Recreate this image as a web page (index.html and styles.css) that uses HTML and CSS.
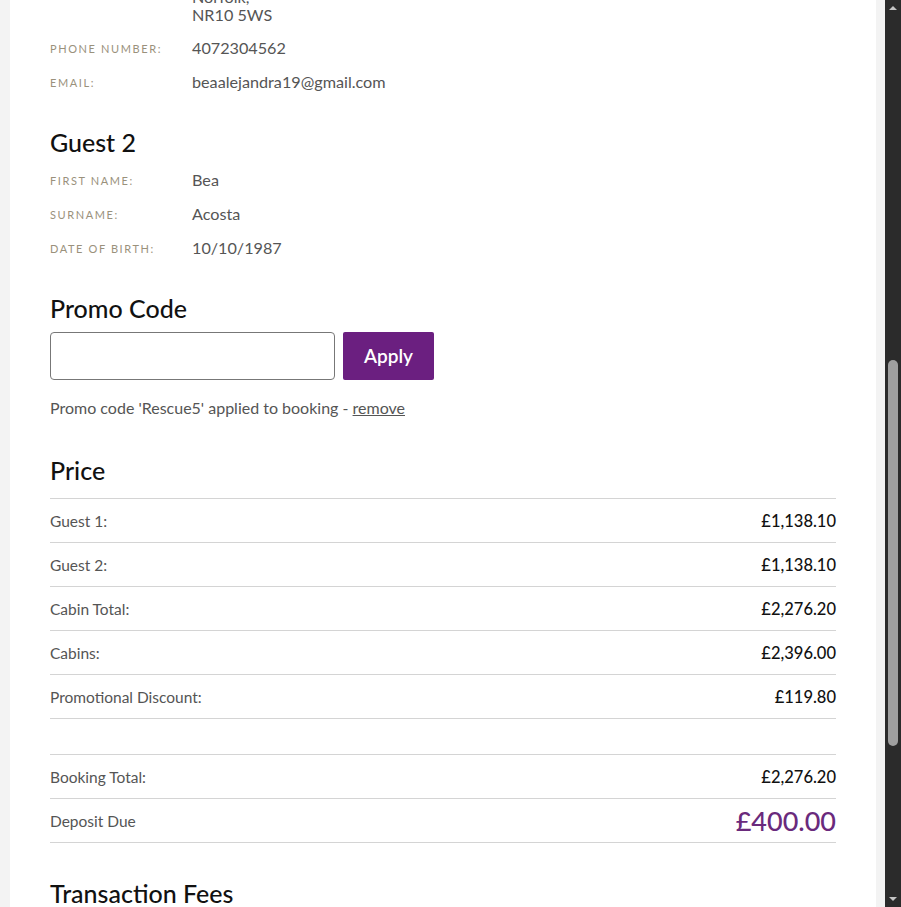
FILE: index.html
```html
<!DOCTYPE html>
<html lang="en">

<head>
    <meta charset="UTF-8">
    <meta name="viewport" content="width=device-width, initial-scale=1.0">
    <title>Booking summary</title>
    <link rel="stylesheet" href="styles.css">
</head>

<body>
    <div class="gutter"></div>

    <main class="panel">
        <dl class="details details-top">
            <dt></dt>
            <dd class="address">Norfolk,<br>NR10 5WS</dd>
            <dt>Phone number:</dt>
            <dd>4072304562</dd>
            <dt>Email:</dt>
            <dd>beaalejandra19@gmail.com</dd>
        </dl>

        <h2>Guest 2</h2>
        <dl class="details">
            <dt>First name:</dt>
            <dd>Bea</dd>
            <dt>Surname:</dt>
            <dd>Acosta</dd>
            <dt>Date of birth:</dt>
            <dd>10/10/1987</dd>
        </dl>

        <h2 class="promo-title">Promo Code</h2>
        <div class="promo">
            <input type="text" class="promo-input">
            <button class="promo-btn">Apply</button>
        </div>
        <p class="promo-note">Promo code 'Rescue5' applied to booking - <a href="#">remove</a></p>

        <h2>Price</h2>
        <div class="prices">
            <div class="row"><span>Guest 1:</span><strong>£1,138.10</strong></div>
            <div class="row"><span>Guest 2:</span><strong>£1,138.10</strong></div>
            <div class="row"><span>Cabin Total:</span><strong>£2,276.20</strong></div>
            <div class="row"><span>Cabins:</span><strong>£2,396.00</strong></div>
            <div class="row"><span>Promotional Discount:</span><strong>£119.80</strong></div>
            <div class="row empty"></div>
            <div class="row"><span>Booking Total:</span><strong>£2,276.20</strong></div>
            <div class="row deposit"><span>Deposit Due</span><strong>£400.00</strong></div>
        </div>

        <h2>Transaction Fees</h2>
    </main>

    <div class="gutter gutter-right"></div>

    <div class="scrollbar">
        <div class="arrow up"></div>
        <div class="track">
            <div class="thumb"></div>
        </div>
        <div class="arrow down"></div>
    </div>
</body>

</html>
```

FILE: styles.css
```css
* {
    margin: 0;
    padding: 0;
    box-sizing: border-box;
}

html,
body {
    height: 907px;
    overflow: hidden;
}

body {
    display: flex;
    background-color: #f3f3f3;
    font-family: Lato, "Noto Sans", sans-serif;
    color: #555;
}

.gutter {
    width: 10px;
    flex-shrink: 0;
}

.gutter-right {
    width: 9px;
}

.panel {
    flex: 1;
    background-color: #FFF;
    padding: 0 40px;
}

h2 {
    font-size: 25px;
    line-height: 28px;
    font-weight: 500;
    color: #111;
    margin: 36px 0 14px;
}

.details {
    display: grid;
    grid-template-columns: 142px 1fr;
    row-gap: 14px;
    align-items: center;
}

.details-top {
    margin-top: -12px;
}

.details dt {
    font-size: 11px;
    letter-spacing: 1.6px;
    text-transform: uppercase;
    color: #9a917c;
}

.details dd {
    font-size: 16.2px;
    line-height: 20px;
    color: #555;
}

.details dd.address {
    line-height: 18px;
}

.promo-title {
    margin-bottom: 10px;
}

.promo {
    display: flex;
    gap: 8px;
}

.promo-input {
    width: 285px;
    height: 48px;
    border: 1px solid #777;
    border-radius: 4px;
    outline: none;
}

.promo-btn {
    width: 91px;
    height: 48px;
    border: none;
    border-radius: 2px;
    background-color: #6b1f80;
    color: #FFF;
    font-family: inherit;
    font-size: 19px;
    font-weight: 600;
    padding-bottom: 2px;
}

.promo-note {
    margin-top: 18px;
    font-size: 16px;
    line-height: 20px;
}

.promo-note a {
    color: #555;
}

.promo-note + h2 {
    margin-top: 38px;
}

.prices {
    border-top: 1px solid #d4d4d4;
}

.row {
    display: flex;
    justify-content: space-between;
    align-items: center;
    height: 44px;
    border-bottom: 1px solid #d4d4d4;
    font-size: 15.5px;
}

.row.empty {
    height: 36px;
}

.row strong {
    font-size: 16.5px;
    font-weight: 500;
    color: #111;
}

.row.deposit strong {
    font-size: 27px;
    color: #6a2a7c;
}

.scrollbar {
    width: 16px;
    flex-shrink: 0;
    background-color: #2b2b2b;
    display: flex;
    flex-direction: column;
}

.arrow {
    height: 16px;
    display: flex;
    justify-content: center;
    align-items: center;
}

.arrow::before {
    content: "";
    border-left: 4px solid transparent;
    border-right: 4px solid transparent;
}

.arrow.up::before {
    border-bottom: 4px solid #c4c4c4;
}

.arrow.down::before {
    border-top: 4px solid #c4c4c4;
}

.track {
    flex: 1;
    padding: 344px 3px 0 3px;
}

.thumb {
    height: 386px;
    background-color: #9f9f9f;
    border-radius: 5px;
}
```
